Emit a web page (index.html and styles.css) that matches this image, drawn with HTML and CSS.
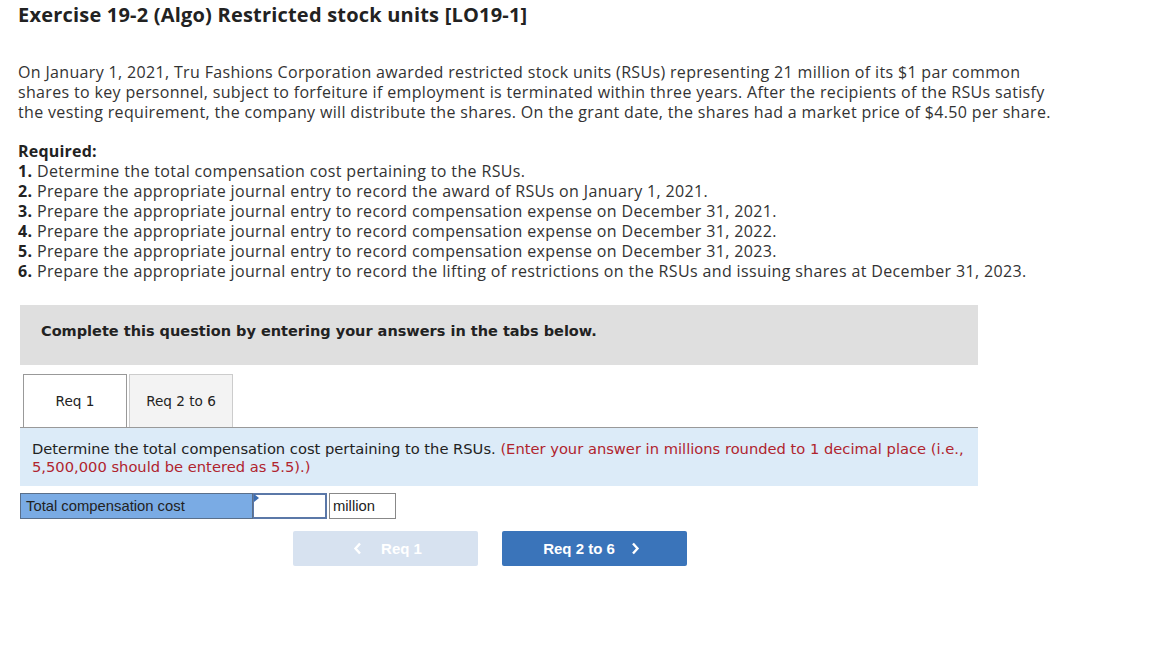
FILE: index.html
```html
<!DOCTYPE html>
<html>
<head>
<meta charset="utf-8">
<link rel="stylesheet" href="styles.css">
</head>
<body>
<div class="page">
  <h1 class="title">Exercise 19-2 (Algo) Restricted stock units [LO19-1]</h1>
  <p class="intro">On January 1, 2021, Tru Fashions Corporation awarded restricted stock units (RSUs) representing 21 million of its $1 par common shares to key personnel, subject to forfeiture if employment is terminated within three years. After the recipients of the RSUs satisfy the vesting requirement, the company will distribute the shares. On the grant date, the shares had a market price of $4.50 per share.</p>
  <div class="required">
    <div class="req-head">Required:</div>
    <div><b>1.</b> Determine the total compensation cost pertaining to the RSUs.</div>
    <div><b>2.</b> Prepare the appropriate journal entry to record the award of RSUs on January 1, 2021.</div>
    <div><b>3.</b> Prepare the appropriate journal entry to record compensation expense on December 31, 2021.</div>
    <div><b>4.</b> Prepare the appropriate journal entry to record compensation expense on December 31, 2022.</div>
    <div><b>5.</b> Prepare the appropriate journal entry to record compensation expense on December 31, 2023.</div>
    <div><b>6.</b> Prepare the appropriate journal entry to record the lifting of restrictions on the RSUs and issuing shares at December 31, 2023.</div>
  </div>
  <div class="question">
    <div class="banner">Complete this question by entering your answers in the tabs below.</div>
    <div class="tabs">
      <div class="tab active">Req 1</div>
      <div class="tab">Req 2 to 6</div>
    </div>
    <div class="instr">Determine the total compensation cost pertaining to the RSUs. <span class="hint">(Enter your answer in millions rounded to 1 decimal place (i.e., 5,500,000 should be entered as 5.5).)</span></div>
    <div class="answer-row">
      <div class="ans-label">Total compensation cost</div>
      <div class="ans-input"><span class="flag"></span></div>
      <div class="ans-unit">million</div>
    </div>
    <div class="nav">
      <div class="btn prev"><svg class="chev left" width="9" height="13" viewBox="0 0 9 13"><path d="M7 1.5 L2.5 6.5 L7 11.5" fill="none" stroke="currentColor" stroke-width="2.4"/></svg><span>Req 1</span></div>
      <div class="btn next"><span>Req 2 to 6</span><svg class="chev right" width="9" height="13" viewBox="0 0 9 13"><path d="M2 1.5 L6.5 6.5 L2 11.5" fill="none" stroke="currentColor" stroke-width="2.4"/></svg></div>
    </div>
  </div>
</div>
</body>
</html>
```

FILE: styles.css
```css
* { box-sizing: border-box; }
html, body { margin: 0; padding: 0; background: #fff; }
.page {
  padding: 4px 0 0 18px;
  font-family: "Open Sans", "Liberation Sans", sans-serif;
  color: #222;
}
.title {
  margin: 0;
  font-size: 20px;
  line-height: 22px;
  font-weight: 700;
  letter-spacing: 0.2px;
  color: #222;
}
.intro {
  margin: 36px 0 0 0;
  width: 1045px;
  font-size: 16px;
  line-height: 20px;
  letter-spacing: 0.34px;
  color: #333;
}
.required {
  margin-top: 19px;
  font-size: 16px;
  line-height: 20px;
  letter-spacing: 0.36px;
  color: #333;
}
.req-head { font-weight: 700; color: #222; letter-spacing: 0.2px; }
.required b { font-weight: 700; color: #222; }
.question {
  margin: 24px 0 0 2px;
  width: 958px;
  font-family: "DejaVu Sans", Verdana, sans-serif;
}
.banner {
  height: 60px;
  background: #dfdfdf;
  padding: 0 0 8px 21px;
  display: flex;
  align-items: center;
  font-size: 14.5px;
  font-weight: 700;
  color: #222;
}
.tabs {
  display: flex;
  gap: 2px;
  margin-top: 9px;
  padding-left: 3px;
  border-bottom: 1px solid #999;
}
.tab {
  width: 104px;
  height: 53px;
  display: flex;
  align-items: center;
  justify-content: center;
  font-size: 13.6px;
  color: #222;
  background: #f3f3f3;
  border: 1px solid #ccc;
  border-bottom: none;
}
.tab.active {
  background: #fff;
  border-color: #999;
}
.instr {
  background: #dcebf8;
  padding: 12px 12px 8px 12px;
  font-size: 14.7px;
  line-height: 18px;
  color: #222;
  height: 58px;
}
.hint { color: #b0242e; }
.answer-row {
  display: flex;
  margin-top: 7px;
  height: 26px;
  font-family: "Liberation Sans", Arial, sans-serif;
  font-size: 14.8px;
}
.ans-label {
  width: 233px;
  background: #7aabe4;
  border: 1px solid #5a6f8a;
  padding-left: 5px;
  display: flex;
  align-items: center;
  color: #222;
}
.ans-input {
  position: relative;
  width: 74px;
  border: 2px solid #5b78a8;
  border-left-width: 1px;
  background: #fff;
}
.flag {
  position: absolute;
  left: 0;
  top: -1px;
  width: 0;
  height: 0;
  border-top: 4px solid transparent;
  border-bottom: 4px solid transparent;
  border-left: 5px solid #3b6cb0;
}
.ans-unit {
  width: 67px;
  margin-left: 2px;
  border: 1px solid #888;
  padding-left: 3px;
  display: flex;
  align-items: center;
  color: #222;
}
.nav {
  display: flex;
  gap: 24px;
  margin: 12px 0 0 273px;
}
.btn {
  width: 185px;
  height: 35px;
  border-radius: 2px;
  display: flex;
  align-items: center;
  justify-content: center;
  font-family: "Liberation Sans", Arial, sans-serif;
  font-weight: 700;
  font-size: 15px;
  color: #fff;
}
.btn.prev { background: #d7e2f0; padding-left: 4px; }
.btn.next { background: #3a74ba; padding-right: 6px; }
.chev.left { margin-right: 19px; }
.chev.right { margin-left: 16px; }
```
